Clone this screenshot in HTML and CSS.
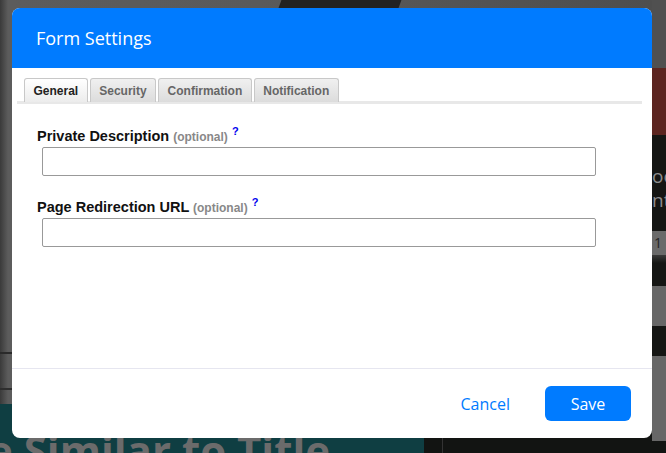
FILE: index.html
```html
<!DOCTYPE html>
<html>
<head>
<meta charset="utf-8">
<link rel="stylesheet" href="styles.css">
</head>
<body>
<div class="page">
  <div class="backdrop">
    <div class="main-bg">
      <div class="photo">
        <span class="streak s1"></span>
        <span class="streak s2"></span>
        <span class="streak s3"></span>
      </div>
      <div class="hero-strip"><span class="hero-text">e Similar to Title</span></div>
    </div>
    <div class="side-bg">
      <div class="side-top"></div>
      <div class="side-red"></div>
      <div class="side-dark"><span>oo</span><span>nt</span></div>
      <div class="side-grey"><span>1</span></div>
      <div class="side-dark2"></div>
      <div class="side-grey2"></div>
      <div class="side-dark3"></div>
      <div class="side-grey3"></div>
      <div class="side-end"></div>
    </div>
  </div>

  <div class="modal">
    <div class="modal-header">Form Settings</div>
    <div class="modal-body">
      <div class="tabs">
        <div class="tab active">General</div>
        <div class="tab">Security</div>
        <div class="tab">Confirmation</div>
        <div class="tab">Notification</div>
      </div>
      <div class="field">
        <label class="label">Private Description <span class="opt">(optional)</span> <sup class="help">?</sup></label>
        <input class="input" type="text">
      </div>
      <div class="field">
        <label class="label">Page Redirection URL <span class="opt">(optional)</span> <sup class="help">?</sup></label>
        <input class="input" type="text">
      </div>
    </div>
    <div class="modal-footer">
      <button class="btn-link">Cancel</button>
      <button class="btn-primary">Save</button>
    </div>
  </div>
</div>
</body>
</html>
```

FILE: styles.css
```css
* { box-sizing: border-box; }
html, body { margin: 0; padding: 0; }
body {
  width: 666px;
  height: 453px;
  overflow: hidden;
  background: #555;
  font-family: "Liberation Sans", Arial, sans-serif;
}
.page {
  position: relative;
  width: 666px;
  height: 453px;
}
.backdrop {
  display: grid;
  grid-template-columns: 652px 14px;
  height: 453px;
}
.main-bg {
  display: flex;
  flex-direction: column;
}
.photo {
  position: relative;
  flex: 1;
  background: linear-gradient(90deg, #3a3a3a 0px, #5c5c5c 8px, #5a5a5a 40%, #4e4e4e 100%);
  overflow: hidden;
}
.streak {
  position: absolute;
  display: block;
}
.s1 { left: 280px; top: 0; width: 120px; height: 8px; transform: skewX(-20deg); background: #222; }
.s2 { left: 0; top: 352px; width: 12px; height: 2px; background: #2a2a2a; }
.s3 { left: 0; top: 388px; width: 12px; height: 2px; background: #2e2e2e; }
.hero-strip {
  height: 49px;
  background: linear-gradient(90deg, #0f3e42 0 424px, #121412 424px 442px, #333 442px 443px, #121412 443px);
  overflow: hidden;
}
.hero-text {
  display: block;
  font-family: "Open Sans", sans-serif;
  font-weight: 700;
  font-size: 42px;
  color: #6b6b6b;
  margin-left: -12px;
  line-height: 1;
  padding-top: 25px;
  white-space: nowrap;
}
.side-bg {
  display: flex;
  flex-direction: column;
  font-family: "Open Sans", sans-serif;
  color: #8c8c8c;
  font-size: 19px;
}
.side-top { height: 68px; background: #505050; }
.side-red { height: 67px; background: #5c2520; }
.side-dark {
  height: 96px;
  background: #151614;
  display: flex;
  flex-direction: column;
  padding-top: 29px;
  line-height: 24px;
  white-space: nowrap;
}
.side-grey { height: 24px; background: #6a6a6a; color: #222; font-size: 14px; padding-left: 2px; line-height: 24px; }
.side-dark2 { height: 31px; background: linear-gradient(#3a3a3a, #151614 8px); }
.side-grey2 { height: 40px; background: #676767; }
.side-dark3 { height: 30px; background: #151614; }
.side-grey3 { height: 85px; background: #676767; }
.side-end { flex: 1; background: #121412; }

.modal {
  position: absolute;
  left: 12px;
  top: 8px;
  width: 640px;
  height: 430px;
  background: #fff;
  border-radius: 8px;
  overflow: hidden;
  display: flex;
  flex-direction: column;
}
.modal-header {
  height: 60px;
  background: #007bff;
  color: #fff;
  font-family: "Open Sans", sans-serif;
  font-size: 18px;
  padding-left: 24px;
  padding-bottom: 1px;
  display: flex;
  align-items: center;
}
.modal-body {
  flex: 1;
  padding: 10px 10px 0 5px;
}
.tabs {
  display: flex;
  gap: 2px;
  padding-left: 7px;
  border-bottom: 3px solid #e8e8e8;
}
.tab {
  height: 24px;
  padding: 0 8.5px;
  border: 1px solid #c8c8c8;
  border-bottom: none;
  border-radius: 3px 3px 0 0;
  background: linear-gradient(#f0f0f0, #dcdcdc);
  font-size: 12px;
  font-weight: 700;
  color: #666;
  display: flex;
  align-items: center;
  margin-bottom: -1px;
}
.tab.active {
  background: linear-gradient(#ffffff, #ececec);
  color: #222;
}
.field {
  padding-left: 20px;
  margin-top: 24px;
}
.field + .field { margin-top: 23px; }
.label {
  display: block;
  font-size: 14.5px;
  font-weight: 700;
  color: #111;
  line-height: 17px;
}
.opt {
  font-size: 12px;
  color: #888;
}
.help {
  font-size: 11px;
  color: #0000ee;
  vertical-align: 6px;
  line-height: 0;
}
.input {
  display: block;
  margin: 1px 0 0 5px;
  width: 554px;
  height: 29px;
  border: 1px solid #999;
  border-radius: 2px;
  background: #fff;
}
.modal-footer {
  height: 70px;
  border-top: 1px solid #e6e6f0;
  display: flex;
  justify-content: flex-end;
  align-items: center;
  gap: 35px;
  padding: 0 21px 0 0;
  font-family: "Open Sans", sans-serif;
}
.btn-link {
  border: none;
  background: none;
  color: #007bff;
  font-family: inherit;
  font-size: 16px;
  padding: 0;
}
.btn-primary {
  width: 86px;
  height: 35px;
  border: none;
  border-radius: 6px;
  background: #007bff;
  color: #fff;
  font-family: inherit;
  font-size: 16px;
}
```
